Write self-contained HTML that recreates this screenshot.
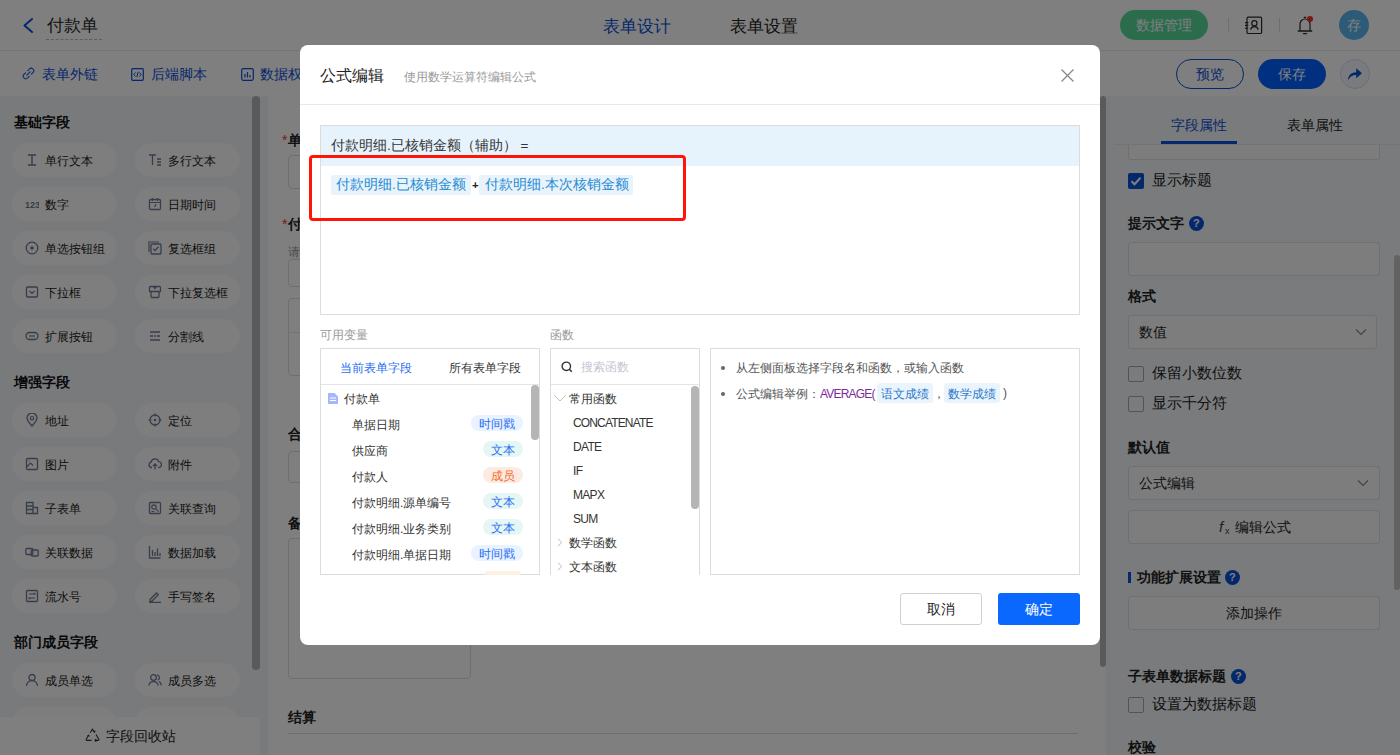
<!DOCTYPE html>
<html><head><meta charset="utf-8">
<style>
*{box-sizing:border-box;margin:0;padding:0}
html,body{width:1400px;height:755px;overflow:hidden;background:#f0f2f5;font-family:"Liberation Sans",sans-serif;color:#333}
.a{position:absolute}
.t{position:absolute;white-space:nowrap;line-height:1}
#hdr{left:0;top:0;width:1400px;height:51px;background:#fff;border-bottom:1px solid #e8e8e8}
#tb{left:0;top:51px;width:1400px;height:45px;background:#fff}
#lp{left:0;top:96px;width:267px;height:659px;background:#f3f5f9}
#cv{left:267px;top:96px;width:843px;height:659px;background:#f3f5f9}
#card{left:268px;top:96px;width:838px;height:659px;background:#fff;overflow:hidden}
#rp{left:1110px;top:96px;width:290px;height:659px;background:#f4f6f8}
.pill{width:105px;height:34px;border-radius:17px;background:#fdfdfd}
#ov{left:0;top:0;width:1400px;height:755px;background:rgba(0,0,0,.5)}
#modal{left:300px;top:45px;width:800px;height:600px;background:#fff;border-radius:8px}
</style></head><body>
<div id="hdr" class="a">
<svg class="a" style="left:22px;top:17px" width="12" height="17" viewBox="0 0 12 17"><path d="M10 2 L2.5 8.5 L10 15" fill="none" stroke="#0b4fd6" stroke-width="2" stroke-linecap="round" stroke-linejoin="round"/></svg>
<div class="t" style="left:47px;top:18px;font-size:16.6px;color:#2a2a2a">付款单</div>
<div class="a" style="left:46px;top:39px;width:56px;border-top:1px dashed #bbb"></div>
<div class="t" style="left:603px;top:18px;font-size:16.5px;color:#0b4fd6">表单设计</div>
<div class="t" style="left:730px;top:18px;font-size:16.5px;color:#222">表单设置</div>
<div class="a" style="left:1120px;top:10px;width:88px;height:30px;border-radius:15px;background:#56d89a"></div>
<div class="t" style="left:1136px;top:18px;font-size:14px;color:#fff">数据管理</div>
<div class="a" style="left:1228px;top:18px;width:1px;height:14px;background:#ddd"></div>
<svg class="a" style="left:1244px;top:16px" width="20" height="19" viewBox="0 0 20 19"><rect x="3" y="1.2" width="14.6" height="16.3" rx="1.3" fill="none" stroke="#2a2a2a" stroke-width="1.2"/><circle cx="10.4" cy="7.3" r="2.6" fill="none" stroke="#2a2a2a" stroke-width="1.2"/><path d="M6.6 13.6 A3.9 3.9 0 0 1 14.2 13.6" fill="none" stroke="#2a2a2a" stroke-width="1.2"/><path d="M1 6.6h3.3M1 9.4h3.3M1 12.2h3.3" stroke="#2a2a2a" stroke-width="1.1"/></svg>
<div class="a" style="left:1279px;top:18px;width:1px;height:14px;background:#ddd"></div>
<svg class="a" style="left:1296px;top:14px" width="18" height="22" viewBox="0 0 18 22"><path d="M4 16.5 V10 A5 5 0 0 1 14 10 V16.5" fill="none" stroke="#2a2a2a" stroke-width="1.2" stroke-linejoin="round"/><path d="M2.3 17h13.4" stroke="#2a2a2a" stroke-width="1.3" stroke-linecap="round"/><path d="M7.5 19.6h3" stroke="#2a2a2a" stroke-width="1.3" stroke-linecap="round"/><path d="M8.2 3.3h1.6" stroke="#2a2a2a" stroke-width="1.2" stroke-linecap="round"/><circle cx="14" cy="4.9" r="3" fill="#f0302a"/></svg>
<div class="a" style="left:1339px;top:10px;width:30px;height:30px;border-radius:15px;background:#5ab6ee"></div>
<div class="t" style="left:1347px;top:18px;font-size:14px;color:#fff">存</div>
</div>
<div id="tb" class="a">
<svg class="a" style="left:22px;top:16px" width="13" height="13" viewBox="0 0 13 13"><path d="M5.8 3.6 L7.4 2 A2.4 2.4 0 0 1 11 5.6 L9.4 7.2 M7.2 9.4 L5.6 11 A2.4 2.4 0 0 1 2 7.4 L3.6 5.8 M4.8 8.2 L8.2 4.8" fill="none" stroke="#0b4fd6" stroke-width="1.05" stroke-linecap="round"/></svg>
<div class="t" style="left:42px;top:16px;font-size:14px;color:#0b4fd6">表单外链</div>
<svg class="a" style="left:131px;top:17px" width="13" height="13" viewBox="0 0 13 13"><rect x="0.7" y="0.7" width="11.6" height="11.6" rx="1" fill="none" stroke="#0b4fd6" stroke-width="1.2"/><path d="M4.5 4.5 L2.8 6.5 L4.5 8.5 M8.5 4.5 L10.2 6.5 L8.5 8.5 M7.2 3.8 L5.8 9.2" fill="none" stroke="#0b4fd6" stroke-width="1"/></svg>
<div class="t" style="left:151px;top:16px;font-size:14px;color:#0b4fd6">后端脚本</div>
<svg class="a" style="left:241px;top:17px" width="13" height="13" viewBox="0 0 13 13"><rect x="0.7" y="0.7" width="11.6" height="11.6" rx="1.5" fill="none" stroke="#0b4fd6" stroke-width="1.2"/><path d="M4 9.5V6M6.5 9.5V4M9 9.5V7" stroke="#0b4fd6" stroke-width="1.2"/></svg>
<div class="t" style="left:260px;top:16px;font-size:14px;color:#0b4fd6">数据权限</div>
<div class="a" style="left:1176px;top:8px;width:68px;height:30px;border-radius:15px;border:1px solid #0b4fd6"></div>
<div class="t" style="left:1196px;top:16px;font-size:14px;color:#0b4fd6">预览</div>
<div class="a" style="left:1258px;top:8px;width:68px;height:30px;border-radius:15px;background:#0061fe"></div>
<div class="t" style="left:1278px;top:16px;font-size:14px;color:#fff">保存</div>
<div class="a" style="left:1340px;top:8px;width:30px;height:30px;border-radius:15px;border:1px solid #d3dcf0;background:#f2f6fc"></div>
<svg class="a" style="left:1347px;top:16px" width="16" height="14" viewBox="0 0 16 14"><path d="M1 13.5 C1 8 4.5 5.2 9.2 5.2 V1.2 L15 6.3 L9.2 11.2 V8 C5.5 8 3 9.5 1 13.5Z" fill="#0b4fd6"/></svg>
</div>
<div id="lp" class="a">
<div class="t" style="left:14px;top:19px;font-size:14px;font-weight:bold;color:#111">基础字段</div>
<div class="a pill" style="left:12px;top:47px"></div>
<svg class="a" style="left:25px;top:57px" width="14" height="14" viewBox="0 0 14 14"><path d="M3 2h8M3 12h8M7 2v10" stroke="#6e7a94" stroke-width="1.4" fill="none"/></svg>
<div class="t" style="left:45px;top:59px;font-size:12px;color:#1a1a1a">单行文本</div>
<div class="a pill" style="left:135px;top:47px"></div>
<svg class="a" style="left:148px;top:57px" width="14" height="14" viewBox="0 0 14 14"><path d="M1 2h7M4.5 2v10M9 6h4M9 9h4M9 12h4" stroke="#6e7a94" stroke-width="1.3" fill="none"/></svg>
<div class="t" style="left:168px;top:59px;font-size:12px;color:#1a1a1a">多行文本</div>
<div class="a pill" style="left:12px;top:91px"></div>
<svg class="a" style="left:25px;top:101px" width="14" height="14" viewBox="0 0 14 14"><text x="0" y="11" font-size="9" font-weight="bold" fill="#6e7a94" font-family="Liberation Sans">123</text></svg>
<div class="t" style="left:45px;top:103px;font-size:12px;color:#1a1a1a">数字</div>
<div class="a pill" style="left:135px;top:91px"></div>
<svg class="a" style="left:148px;top:101px" width="14" height="14" viewBox="0 0 14 14"><rect x="1.5" y="2.5" width="11" height="10" rx="1.2" stroke="#6e7a94" stroke-width="1.3" fill="none"/><path d="M1.5 5.5h11M4.5 1v3M9.5 1v3M8 7l-1.5 3" stroke="#6e7a94" stroke-width="1.2" fill="none"/></svg>
<div class="t" style="left:168px;top:103px;font-size:12px;color:#1a1a1a">日期时间</div>
<div class="a pill" style="left:12px;top:135px"></div>
<svg class="a" style="left:25px;top:145px" width="14" height="14" viewBox="0 0 14 14"><circle cx="7" cy="7" r="5.8" stroke="#6e7a94" stroke-width="1.3" fill="none"/><circle cx="7" cy="7" r="1.8" fill="#6e7a94"/></svg>
<div class="t" style="left:45px;top:147px;font-size:12px;color:#1a1a1a">单选按钮组</div>
<div class="a pill" style="left:135px;top:135px"></div>
<svg class="a" style="left:148px;top:145px" width="14" height="14" viewBox="0 0 14 14"><path d="M1 11V1h10" stroke="#6e7a94" stroke-width="1.2" fill="none"/><rect x="3" y="3" width="10" height="10" rx="1" stroke="#6e7a94" stroke-width="1.3" fill="none"/><path d="M5.2 7.8l1.8 1.8 3.5-3.8" stroke="#6e7a94" stroke-width="1.3" fill="none"/></svg>
<div class="t" style="left:168px;top:147px;font-size:12px;color:#1a1a1a">复选框组</div>
<div class="a pill" style="left:12px;top:179px"></div>
<svg class="a" style="left:25px;top:189px" width="14" height="14" viewBox="0 0 14 14"><rect x="1.5" y="2" width="11" height="10" rx="1" stroke="#6e7a94" stroke-width="1.3" fill="none"/><path d="M4.5 6l2.5 2.5 2.5-2.5" stroke="#6e7a94" stroke-width="1.2" fill="none"/></svg>
<div class="t" style="left:45px;top:191px;font-size:12px;color:#1a1a1a">下拉框</div>
<div class="a pill" style="left:135px;top:179px"></div>
<svg class="a" style="left:148px;top:189px" width="14" height="14" viewBox="0 0 14 14"><path d="M1.5 6.5V2.5a1 1 0 0 1 1-1h9a1 1 0 0 1 1 1v4zM3 6.5v5a1 1 0 0 0 1 1h6a1 1 0 0 0 1-1v-5M5.5 1.5l1.5 2 1.5-2" stroke="#6e7a94" stroke-width="1.3" fill="none" stroke-linejoin="round"/></svg>
<div class="t" style="left:168px;top:191px;font-size:12px;color:#1a1a1a">下拉复选框</div>
<div class="a pill" style="left:12px;top:223px"></div>
<svg class="a" style="left:25px;top:233px" width="14" height="14" viewBox="0 0 14 14"><rect x="1" y="3.5" width="12" height="7" rx="3.5" stroke="#6e7a94" stroke-width="1.3" fill="none"/><path d="M4 7h6" stroke="#6e7a94" stroke-width="1.2"/></svg>
<div class="t" style="left:45px;top:235px;font-size:12px;color:#1a1a1a">扩展按钮</div>
<div class="a pill" style="left:135px;top:223px"></div>
<svg class="a" style="left:148px;top:233px" width="14" height="14" viewBox="0 0 14 14"><path d="M2 3h10M2 7h3M6 7h2M9 7h3M2 11h10" stroke="#6e7a94" stroke-width="1.3" fill="none"/></svg>
<div class="t" style="left:168px;top:235px;font-size:12px;color:#1a1a1a">分割线</div>
<div class="t" style="left:14px;top:279px;font-size:14px;font-weight:bold;color:#111">增强字段</div>
<div class="a pill" style="left:12px;top:307px"></div>
<svg class="a" style="left:25px;top:317px" width="14" height="14" viewBox="0 0 14 14"><path d="M7 13 C3 8.5 2 6.5 2 5 A5 5 0 0 1 12 5 C12 6.5 11 8.5 7 13Z" stroke="#6e7a94" stroke-width="1.3" fill="none"/><circle cx="7" cy="5.2" r="1.7" stroke="#6e7a94" stroke-width="1.2" fill="none"/></svg>
<div class="t" style="left:45px;top:319px;font-size:12px;color:#1a1a1a">地址</div>
<div class="a pill" style="left:135px;top:307px"></div>
<svg class="a" style="left:148px;top:317px" width="14" height="14" viewBox="0 0 14 14"><circle cx="7" cy="7" r="5" stroke="#6e7a94" stroke-width="1.3" fill="none"/><circle cx="7" cy="7" r="1.3" fill="#6e7a94"/><path d="M7 0.5v3M7 10.5v3M0.5 7h3M10.5 7h3" stroke="#6e7a94" stroke-width="1.2"/></svg>
<div class="t" style="left:168px;top:319px;font-size:12px;color:#1a1a1a">定位</div>
<div class="a pill" style="left:12px;top:351px"></div>
<svg class="a" style="left:25px;top:361px" width="14" height="14" viewBox="0 0 14 14"><rect x="1.5" y="1.5" width="11" height="11" rx="1.2" stroke="#6e7a94" stroke-width="1.3" fill="none"/><path d="M1.5 10l4-4 2.5 2.5M3.5 4h1" stroke="#6e7a94" stroke-width="1.2" fill="none"/></svg>
<div class="t" style="left:45px;top:363px;font-size:12px;color:#1a1a1a">图片</div>
<div class="a pill" style="left:135px;top:351px"></div>
<svg class="a" style="left:148px;top:361px" width="14" height="14" viewBox="0 0 14 14"><path d="M4 10.5H3.5A2.8 2.8 0 0 1 3.2 5 A3.8 3.8 0 0 1 10.6 4.7 A2.9 2.9 0 0 1 10.5 10.5H10M7 12.5V7M5 9l2-2 2 2" stroke="#6e7a94" stroke-width="1.3" fill="none"/></svg>
<div class="t" style="left:168px;top:363px;font-size:12px;color:#1a1a1a">附件</div>
<div class="a pill" style="left:12px;top:395px"></div>
<svg class="a" style="left:25px;top:405px" width="14" height="14" viewBox="0 0 14 14"><path d="M8 12.5H1.5V1.5h6.5v11zM1.5 5h6.5M1.5 8.5h6.5M8 6.5h4.5v6H8" stroke="#6e7a94" stroke-width="1.3" fill="none"/></svg>
<div class="t" style="left:45px;top:407px;font-size:12px;color:#1a1a1a">子表单</div>
<div class="a pill" style="left:135px;top:395px"></div>
<svg class="a" style="left:148px;top:405px" width="14" height="14" viewBox="0 0 14 14"><rect x="1.5" y="1.5" width="11" height="11" rx="1" stroke="#6e7a94" stroke-width="1.3" fill="none"/><circle cx="6" cy="6" r="2.2" stroke="#6e7a94" stroke-width="1.2" fill="none"/><path d="M7.6 7.6l3 3M3.5 10.5h3" stroke="#6e7a94" stroke-width="1.2"/></svg>
<div class="t" style="left:168px;top:407px;font-size:12px;color:#1a1a1a">关联查询</div>
<div class="a pill" style="left:12px;top:439px"></div>
<svg class="a" style="left:25px;top:449px" width="14" height="14" viewBox="0 0 14 14"><rect x="0.8" y="3.5" width="7" height="6" rx="1" stroke="#6e7a94" stroke-width="1.3" fill="none"/><rect x="6.2" y="5" width="7" height="6" rx="1" stroke="#6e7a94" stroke-width="1.3" fill="none"/></svg>
<div class="t" style="left:45px;top:451px;font-size:12px;color:#1a1a1a">关联数据</div>
<div class="a pill" style="left:135px;top:439px"></div>
<svg class="a" style="left:148px;top:449px" width="14" height="14" viewBox="0 0 14 14"><path d="M1.5 1v12h11M4.5 11V5M7 11V7M9.5 11V3.5M12 11V8" stroke="#6e7a94" stroke-width="1.3" fill="none"/></svg>
<div class="t" style="left:168px;top:451px;font-size:12px;color:#1a1a1a">数据加载</div>
<div class="a pill" style="left:12px;top:483px"></div>
<svg class="a" style="left:25px;top:493px" width="14" height="14" viewBox="0 0 14 14"><rect x="1.5" y="1.5" width="11" height="11" rx="1" stroke="#6e7a94" stroke-width="1.3" fill="none"/><path d="M4 5h6l-1.2-1.2M10 9H4l1.2 1.2" stroke="#6e7a94" stroke-width="1.2" fill="none"/></svg>
<div class="t" style="left:45px;top:495px;font-size:12px;color:#1a1a1a">流水号</div>
<div class="a pill" style="left:135px;top:483px"></div>
<svg class="a" style="left:148px;top:493px" width="14" height="14" viewBox="0 0 14 14"><path d="M2 10.5l6.5-6.5 1.8 1.8-6.5 6.5H2zM1 13.3h12" stroke="#6e7a94" stroke-width="1.3" fill="none"/></svg>
<div class="t" style="left:168px;top:495px;font-size:12px;color:#1a1a1a">手写签名</div>
<div class="t" style="left:14px;top:539px;font-size:14px;font-weight:bold;color:#111">部门成员字段</div>
<div class="a pill" style="left:12px;top:567px"></div>
<svg class="a" style="left:25px;top:577px" width="14" height="14" viewBox="0 0 14 14"><circle cx="7" cy="4.5" r="3" stroke="#6e7a94" stroke-width="1.3" fill="none"/><path d="M1.5 13 A5.5 5.5 0 0 1 12.5 13" stroke="#6e7a94" stroke-width="1.3" fill="none"/></svg>
<div class="t" style="left:45px;top:579px;font-size:12px;color:#1a1a1a">成员单选</div>
<div class="a pill" style="left:135px;top:567px"></div>
<svg class="a" style="left:148px;top:577px" width="14" height="14" viewBox="0 0 14 14"><circle cx="5.5" cy="4.5" r="2.8" stroke="#6e7a94" stroke-width="1.3" fill="none"/><path d="M0.8 12.5 A4.8 4.8 0 0 1 10.2 12.5M9 1.8 A2.8 2.8 0 0 1 9.5 7.2 M11 8.5 A4.5 4.5 0 0 1 13.3 12.5" stroke="#6e7a94" stroke-width="1.3" fill="none"/></svg>
<div class="t" style="left:168px;top:579px;font-size:12px;color:#1a1a1a">成员多选</div>
<div class="a pill" style="left:12px;top:611px"></div>
<div class="a pill" style="left:135px;top:611px"></div>
<div class="a" style="left:252px;top:0;width:8px;height:574px;border-radius:4px;background:#b4b4b4"></div>
<div class="a" style="left:0;top:621px;width:260px;height:38px;background:#fff"></div>
<svg class="a" style="left:85px;top:632px" width="15" height="14" viewBox="0 0 15 14"><path d="M5.2 4.8 L7.5 1 L9.3 4 M8.2 3.6 L9.6 4.2 L10 2.7" fill="none" stroke="#333" stroke-width="1.1" stroke-linejoin="round"/><path d="M11 6.5 L13.8 11.2 A0.8 0.8 0 0 1 13.1 12.4 H10 M11.2 11 L9.9 12.4 L11.2 13.6" fill="none" stroke="#333" stroke-width="1.1" stroke-linejoin="round"/><path d="M6.5 12.4 H1.9 A0.8 0.8 0 0 1 1.2 11.2 L3.4 7.5 M2.4 7.9 L3.6 7.2 L4.4 8.6" fill="none" stroke="#333" stroke-width="1.1" stroke-linejoin="round"/></svg>
<div class="t" style="left:106px;top:633px;font-size:14px;color:#222">字段回收站</div>
</div>
<div id="cv" class="a"></div>
<div id="card" class="a">
<div class="t" style="left:14px;top:37px;font-size:14px;color:#e53935">*</div>
<div class="t" style="left:20px;top:37px;font-size:14px;font-weight:bold;color:#222">单据日期</div>
<div class="a" style="left:20px;top:59px;width:300px;height:34px;border:1px solid #ddd;border-radius:4px"></div>
<div class="t" style="left:14px;top:121px;font-size:14px;color:#e53935">*</div>
<div class="t" style="left:20px;top:121px;font-size:14px;font-weight:bold;color:#222">付款明细</div>
<div class="t" style="left:20px;top:150px;font-size:12px;color:#999">请添加明细</div>
<div class="a" style="left:20px;top:163px;width:300px;height:28px;border:1px solid #ddd;border-radius:4px"></div>
<div class="a" style="left:20px;top:202px;width:800px;height:78px;border:1px solid #ddd;border-radius:4px"></div>
<div class="a" style="left:20px;top:236px;width:800px;height:1px;background:#e6e6e6"></div>
<div class="t" style="left:20px;top:331px;font-size:14px;font-weight:bold;color:#222">合计金额</div>
<div class="a" style="left:20px;top:355px;width:300px;height:32px;border:1px solid #ddd;border-radius:4px"></div>
<div class="t" style="left:20px;top:420px;font-size:14px;font-weight:bold;color:#222">备注</div>
<div class="a" style="left:20px;top:442px;width:183px;height:141px;border:1px solid #ddd;border-radius:4px"></div>
<div class="t" style="left:20px;top:614px;font-size:14px;font-weight:bold;color:#222">结算</div>
<div class="a" style="left:20px;top:637px;width:790px;height:1px;background:#ddd"></div>
<div class="a" style="left:832px;top:0;width:6px;height:571px;border-radius:4px;background:#b4b4b4"></div>
</div>
<div id="rp" class="a">
<div class="a" style="left:18px;top:44px;width:252px;height:20px;border:1px solid #e0e0e0;border-top:none;border-radius:0 0 3px 3px;background:#fafafa"></div>
<div class="a" style="left:0;top:0;width:290px;height:48px;background:#f4f6f8"></div>
<div class="t" style="left:61px;top:22px;font-size:14px;color:#0b4fd6">字段属性</div>
<div class="t" style="left:177px;top:22px;font-size:14px;color:#222">表单属性</div>
<div class="a" style="left:51px;top:45px;width:76px;height:3px;background:#0b4fd6"></div>
<div class="a" style="left:4px;top:48px;width:286px;height:1px;background:#e8e8e8"></div>
<div class="a" style="left:18px;top:77px;width:16px;height:16px;border-radius:2px;background:#0b4fd6"></div><svg class="a" style="left:18px;top:77px" width="16" height="16" viewBox="0 0 16 16"><path d="M3.5 8.2l3 3 6-6.5" stroke="#fff" stroke-width="2" fill="none"/></svg>
<div class="t" style="left:42px;top:77px;font-size:14.6px;color:#222">显示标题</div>
<div class="t" style="left:18px;top:120px;font-size:14px;font-weight:bold;color:#222">提示文字</div>
<div class="a" style="left:79px;top:120px;width:15px;height:15px;border-radius:8px;background:#0b4fd6"></div><div class="t" style="left:83px;top:122px;font-size:11px;font-weight:bold;color:#fff">?</div>
<div class="a" style="left:18px;top:146px;width:252px;height:34px;border:1px solid #e0e0e0;border-radius:3px;background:#fafafa"></div>
<div class="t" style="left:18px;top:193px;font-size:14px;font-weight:bold;color:#222">格式</div>
<div class="a" style="left:18px;top:219px;width:249px;height:34px;border:1px solid #e0e0e0;border-radius:3px;background:#fafafa"></div>
<div class="t" style="left:29px;top:229px;font-size:14px;color:#222">数值</div>
<svg class="a" style="left:245px;top:232px" width="12" height="8" viewBox="0 0 12 8"><path d="M1 1.5l5 5 5-5" stroke="#888" stroke-width="1.2" fill="none"/></svg>
<div class="a" style="left:18px;top:270px;width:16px;height:16px;border-radius:2px;border:1px solid #a8a8a8;background:transparent"></div>
<div class="t" style="left:42px;top:270px;font-size:14.6px;color:#222">保留小数位数</div>
<div class="a" style="left:18px;top:300px;width:16px;height:16px;border-radius:2px;border:1px solid #a8a8a8;background:transparent"></div>
<div class="t" style="left:42px;top:300px;font-size:14.6px;color:#222">显示千分符</div>
<div class="t" style="left:18px;top:344px;font-size:14px;font-weight:bold;color:#222">默认值</div>
<div class="a" style="left:18px;top:370px;width:252px;height:34px;border:1px solid #e0e0e0;border-radius:3px;background:#fafafa"></div>
<div class="t" style="left:29px;top:380px;font-size:14px;color:#222">公式编辑</div>
<svg class="a" style="left:247px;top:383px" width="12" height="8" viewBox="0 0 12 8"><path d="M1 1.5l5 5 5-5" stroke="#888" stroke-width="1.2" fill="none"/></svg>
<div class="a" style="left:18px;top:414px;width:252px;height:34px;border:1px solid #e0e0e0;border-radius:3px;background:#fafafa"></div>
<div class="t" style="left:109px;top:423px;font-size:15px;font-style:italic;color:#444">f</div><div class="t" style="left:115px;top:431px;font-size:9px;color:#444">x</div>
<div class="t" style="left:125px;top:424px;font-size:14px;color:#222">编辑公式</div>
<div class="a" style="left:18px;top:476px;width:3px;height:11px;background:#0b4fd6"></div>
<div class="t" style="left:27px;top:474px;font-size:14px;font-weight:bold;color:#222">功能扩展设置</div>
<div class="a" style="left:115px;top:474px;width:15px;height:15px;border-radius:8px;background:#0b4fd6"></div><div class="t" style="left:119px;top:476px;font-size:11px;font-weight:bold;color:#fff">?</div>
<div class="a" style="left:18px;top:500px;width:252px;height:34px;border:1px solid #e0e0e0;border-radius:3px;background:#fafafa"></div>
<div class="t" style="left:116px;top:510px;font-size:14px;color:#222">添加操作</div>
<div class="t" style="left:18px;top:573px;font-size:14px;font-weight:bold;color:#222">子表单数据标题</div>
<div class="a" style="left:121px;top:573px;width:15px;height:15px;border-radius:8px;background:#0b4fd6"></div><div class="t" style="left:125px;top:575px;font-size:11px;font-weight:bold;color:#fff">?</div>
<div class="a" style="left:18px;top:601px;width:16px;height:16px;border-radius:2px;border:1px solid #a8a8a8;background:transparent"></div>
<div class="t" style="left:42px;top:601px;font-size:14.6px;color:#222">设置为数据标题</div>
<div class="t" style="left:18px;top:644px;font-size:14px;font-weight:bold;color:#222">校验</div>
<div class="a" style="left:284px;top:159px;width:6px;height:335px;border-radius:3px;background:#c4c4c4"></div>
</div>
<div id="ov" class="a"></div>
<div id="modal" class="a">
<div class="t" style="left:20px;top:23px;font-size:16px;color:#222;">公式编辑</div>
<div class="t" style="left:104px;top:26px;font-size:12px;color:#999;">使用数学运算符编辑公式</div>
<svg class="a" style="left:760px;top:23px" width="15" height="15" viewBox="0 0 15 15"><path d="M1.5 1.5l12 12M13.5 1.5l-12 12" stroke="#888" stroke-width="1.3"/></svg>
<div class="a" style="left:0px;top:59px;width:800px;height:1px;background:#e8e8e8"></div>
<div class="a" style="left:20px;top:80px;width:760px;height:190px;border:1px solid #dcdcdc"></div>
<div class="a" style="left:21px;top:81px;width:758px;height:40px;background:#e6f3fd"></div>
<div class="t" style="left:31px;top:94px;font-size:13.5px;color:#333;">付款明细.已核销金额（辅助） =</div>
<div class="a" style="left:31px;top:130px;width:140px;height:20px;background:#e8f3fc;border-radius:2px"></div>
<div class="t" style="left:36px;top:133px;font-size:13.5px;color:#1f8ad2;">付款明细.已核销金额</div>
<div class="t" style="left:172px;top:135px;font-size:11.5px;color:#222;font-weight:bold">+</div>
<div class="a" style="left:179px;top:130px;width:154px;height:20px;background:#e8f3fc;border-radius:2px"></div>
<div class="t" style="left:185px;top:133px;font-size:13.5px;color:#1f8ad2;">付款明细.本次核销金额</div>
<div class="a" style="left:9px;top:110px;width:377px;height:66px;border:3px solid #ff1408;border-radius:4px"></div>
<div class="t" style="left:20px;top:284px;font-size:12px;color:#999;">可用变量</div>
<div class="t" style="left:250px;top:284px;font-size:12px;color:#999;">函数</div>
<div class="a" style="left:20px;top:303px;width:220px;height:227px;border:1px solid #dcdcdc"></div>
<div class="t" style="left:40px;top:317px;font-size:12px;color:#1f6ef0;">当前表单字段</div>
<div class="t" style="left:149px;top:317px;font-size:12px;color:#333;">所有表单字段</div>
<div class="a" style="left:21px;top:339px;width:218px;height:1px;background:#e4e4e4"></div>
<svg class="a" style="left:28px;top:348px" width="10" height="11" viewBox="0 0 10 11"><path d="M0 0h6.5L10 3.5V11H0z" fill="#a5b8ff"/><path d="M2 5h6M2 7.5h6" stroke="#fff" stroke-width="1"/></svg>
<div class="t" style="left:44px;top:348px;font-size:12px;color:#333;">付款单</div>
<div class="t" style="left:52px;top:374px;font-size:12px;color:#333;">单据日期</div>
<div class="a" style="left:171px;top:370px;width:52px;height:16px;background:#e9f2ff;border-radius:8px"></div>
<div class="t" style="left:179px;top:373px;font-size:12px;color:#2a6ef5;">时间戳</div>
<div class="t" style="left:52px;top:400px;font-size:12px;color:#333;">供应商</div>
<div class="a" style="left:183px;top:396px;width:40px;height:16px;background:#e5f7f5;border-radius:8px"></div>
<div class="t" style="left:191px;top:399px;font-size:12px;color:#2a6ef5;">文本</div>
<div class="t" style="left:52px;top:426px;font-size:12px;color:#333;">付款人</div>
<div class="a" style="left:183px;top:422px;width:40px;height:16px;background:#fdebe2;border-radius:8px"></div>
<div class="t" style="left:191px;top:425px;font-size:12px;color:#f26b2c;">成员</div>
<div class="t" style="left:52px;top:452px;font-size:12px;color:#333;">付款明细.源单编号</div>
<div class="a" style="left:183px;top:448px;width:40px;height:16px;background:#e5f7f5;border-radius:8px"></div>
<div class="t" style="left:191px;top:451px;font-size:12px;color:#2a6ef5;">文本</div>
<div class="t" style="left:52px;top:478px;font-size:12px;color:#333;">付款明细.业务类别</div>
<div class="a" style="left:183px;top:474px;width:40px;height:16px;background:#e5f7f5;border-radius:8px"></div>
<div class="t" style="left:191px;top:477px;font-size:12px;color:#2a6ef5;">文本</div>
<div class="t" style="left:52px;top:504px;font-size:12px;color:#333;">付款明细.单据日期</div>
<div class="a" style="left:171px;top:500px;width:52px;height:16px;background:#e9f2ff;border-radius:8px"></div>
<div class="t" style="left:179px;top:503px;font-size:12px;color:#2a6ef5;">时间戳</div>
<div class="a" style="left:185px;top:526px;width:36px;height:4px;background:#fdf1df;border-radius:3px 3px 0 0"></div>
<div class="a" style="left:231px;top:340px;width:8px;height:55px;background:#b5b5b5;border-radius:4px"></div>
<div class="a" style="left:250px;top:303px;width:150px;height:227px;border:1px solid #dcdcdc"></div>
<svg class="a" style="left:261px;top:316px" width="12" height="12" viewBox="0 0 12 12"><circle cx="5.3" cy="5.3" r="4.2" stroke="#333" stroke-width="1.4" fill="none"/><path d="M8.3 8.3l2.5 2.5" stroke="#333" stroke-width="1.5"/></svg>
<div class="t" style="left:281px;top:316px;font-size:12px;color:#c4c8d0;">搜索函数</div>
<div class="a" style="left:251px;top:339px;width:148px;height:1px;background:#e4e4e4"></div>
<svg class="a" style="left:254px;top:350px" width="12" height="7" viewBox="0 0 12 7"><path d="M0.5 0.5l5.5 5.5 5.5-5.5" stroke="#c0c0c0" stroke-width="1" fill="none"/></svg>
<div class="t" style="left:269px;top:348px;font-size:12px;color:#333;">常用函数</div>
<div class="t" style="left:273px;top:372px;font-size:12px;color:#333;letter-spacing:-0.85px;font-size:12px">CONCATENATE</div>
<div class="t" style="left:273px;top:396px;font-size:12px;color:#333;letter-spacing:-0.7px;font-size:12px">DATE</div>
<div class="t" style="left:273px;top:420px;font-size:12px;color:#333;letter-spacing:-0.7px;font-size:12px">IF</div>
<div class="t" style="left:273px;top:444px;font-size:12px;color:#333;letter-spacing:-0.7px;font-size:12px">MAPX</div>
<div class="t" style="left:273px;top:468px;font-size:12px;color:#333;letter-spacing:-0.7px;font-size:12px">SUM</div>
<svg class="a" style="left:257px;top:493px" width="6" height="9" viewBox="0 0 6 9"><path d="M1 0.8l3.8 3.7-3.8 3.7" stroke="#bbb" stroke-width="1" fill="none"/></svg>
<div class="t" style="left:269px;top:492px;font-size:12px;color:#333;">数学函数</div>
<svg class="a" style="left:257px;top:517px" width="6" height="9" viewBox="0 0 6 9"><path d="M1 0.8l3.8 3.7-3.8 3.7" stroke="#bbb" stroke-width="1" fill="none"/></svg>
<div class="t" style="left:269px;top:516px;font-size:12px;color:#333;">文本函数</div>
<div class="a" style="left:251px;top:529px;width:148px;height:1px;background:#fff"></div>
<div class="a" style="left:391px;top:341px;width:8px;height:123px;background:#b5b5b5;border-radius:4px"></div>
<div class="a" style="left:410px;top:303px;width:370px;height:227px;border:1px solid #dcdcdc"></div>
<div class="a" style="left:421px;top:321px;width:4px;height:4px;background:#666;border-radius:2px"></div>
<div class="t" style="left:436px;top:317px;font-size:12px;color:#555;">从左侧面板选择字段名和函数，或输入函数</div>
<div class="a" style="left:421px;top:347px;width:4px;height:4px;background:#666;border-radius:2px"></div>
<div class="t" style="left:436px;top:343px;font-size:12px;color:#555;">公式编辑举例：</div>
<div class="t" style="left:520px;top:343px;font-size:12px;color:#7e2a9c;letter-spacing:-0.8px">AVERAGE(</div>
<div class="a" style="left:577px;top:338px;width:56px;height:20px;background:#eaf4fd;border-radius:3px"></div>
<div class="t" style="left:581px;top:343px;font-size:12px;color:#2a78c8;">语文成绩</div>
<div class="t" style="left:633px;top:343px;font-size:12px;color:#555;">，</div>
<div class="a" style="left:644px;top:338px;width:56px;height:20px;background:#eaf4fd;border-radius:3px"></div>
<div class="t" style="left:648px;top:343px;font-size:12px;color:#2a78c8;">数学成绩</div>
<div class="t" style="left:703px;top:342px;font-size:12px;color:#555;">)</div>
<div class="a" style="left:600px;top:548px;width:82px;height:32px;border:1px solid #d0d0d0;border-radius:3px"></div>
<div class="t" style="left:627px;top:557px;font-size:14px;color:#222;">取消</div>
<div class="a" style="left:698px;top:548px;width:82px;height:32px;background:#0a68ff;border-radius:3px"></div>
<div class="t" style="left:725px;top:557px;font-size:14px;color:#fff;">确定</div>
</div>
</body></html>
